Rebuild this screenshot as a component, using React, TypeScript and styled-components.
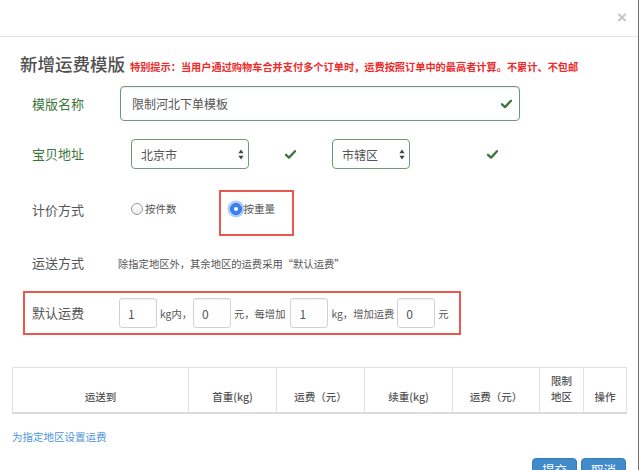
import React from "react";
import styled, { createGlobalStyle } from "styled-components";

const Global = createGlobalStyle`
  html, body { margin: 0; padding: 0; background: #fff; }
  body { font-family: "Noto Sans CJK SC", "Noto Sans", sans-serif; color: #555; }
  * { box-sizing: border-box; }
`;

const Modal = styled.div`
  width: 639px;
  height: 470px;
  border-right: 1px solid #6e6e6e;
  overflow: hidden;
  background: #fff;
`;

const Header = styled.div`
  height: 37px;
  border-bottom: 1px solid #e5e5e5;
  display: flex;
  justify-content: flex-end;
  align-items: center;
  padding-right: 11px;
`;

const Close = styled.span`
  font-family: "Liberation Sans", Arial, sans-serif;
  font-size: 17px;
  font-weight: bold;
  color: #c4c4c4;
  line-height: 1;
  margin-top: -1px;
`;

const Body = styled.div`
  padding: 14px 12px 0 12px;
  display: flex;
  flex-direction: column;
`;

const TitleRow = styled.div`
  display: flex;
  align-items: baseline;
  gap: 5px;
  padding-left: 8px;
  height: 26px;
`;

const Title = styled.h4`
  margin: 0;
  font-size: 17.5px;
  font-weight: 500;
  color: #505050;
  line-height: 26px;
`;

const Hint = styled.span`
  font-size: 10.2px;
  font-weight: bold;
  color: #ec2b2b;
`;

const Row = styled.div<{ $top: number; $h: number; $align?: string }>`
  display: flex;
  align-items: ${(p) => p.$align ?? "center"};
  margin-top: ${(p) => p.$top}px;
  height: ${(p) => p.$h}px;
  padding-left: 20px;
`;

const Label = styled.label<{ $ok?: boolean; $w?: number; $mt?: number }>`
  width: ${(p) => p.$w ?? 88}px;
  flex: none;
  font-size: 13px;
  line-height: 18px;
  margin-top: ${(p) => p.$mt ?? 0}px;
  color: ${(p) => (p.$ok ? "#3c763d" : "#555")};
`;

const InputWrap = styled.div<{ $w: number }>`
  position: relative;
  width: ${(p) => p.$w}px;
  height: 100%;
`;

const TextInput = styled.div`
  width: 100%;
  height: 100%;
  border: 1px solid #6f9a6f;
  border-radius: 4px;
  box-shadow: inset 0 1px 1px rgba(0, 0, 0, 0.075);
  padding-left: 11px;
  display: flex;
  align-items: center;
  font-size: 12px;
  color: #555;
`;

const Feedback = styled.span`
  position: absolute;
  right: 8px;
  top: 50%;
  transform: translateY(-50%);
  display: flex;
`;

const Check = () => (
  <svg width="11" height="9" viewBox="0 0 11 9">
    <path d="M1 4.8 L4 7.6 L10 1.2" fill="none" stroke="#3c763d" strokeWidth="2.3" strokeLinecap="round" strokeLinejoin="round" />
  </svg>
);

const SelectGroup = styled.div`
  display: flex;
  align-items: center;
  height: 100%;
  padding-left: 11px;
`;

const Select = styled.div<{ $w: number }>`
  width: ${(p) => p.$w}px;
  height: 100%;
  border: 1px solid #6f9a6f;
  border-radius: 4px;
  padding: 0 4px 0 9px;
  display: flex;
  align-items: center;
  justify-content: space-between;
  font-size: 12px;
  color: #555;
`;

const CheckSlot = styled.span<{ $w: number }>`
  width: ${(p) => p.$w}px;
  display: flex;
  justify-content: center;
`;

const Arrows = () => (
  <svg width="6" height="11" viewBox="0 0 6 11">
    <path d="M3 0.5 L5.6 4.3 L0.4 4.3 Z" fill="#444" />
    <path d="M3 10.5 L5.6 6.7 L0.4 6.7 Z" fill="#444" />
  </svg>
);

const RadioGroup = styled.div`
  display: flex;
  align-items: flex-start;
  height: 100%;
  padding-left: 11px;
`;

const RadioOption = styled.span<{ $mt?: number }>`
  display: flex;
  align-items: center;
  gap: 2px;
  font-size: 10.5px;
  line-height: 14px;
  color: #555;
  margin-top: ${(p) => p.$mt ?? 0}px;
`;

const RadioDot = styled.span<{ $on?: boolean }>`
  width: 12px;
  height: 12px;
  border-radius: 50%;
  flex: none;
  display: flex;
  align-items: center;
  justify-content: center;
  border: 1px solid ${(p) => (p.$on ? "#2f74e6" : "#9a9a9a")};
  background: ${(p) => (p.$on ? "#3a82f0" : "linear-gradient(#fff, #ececec)")};
  box-shadow: ${(p) => (p.$on ? "0 0 0 2.5px rgba(80,140,240,0.45)" : "none")};
  &::after {
    content: "";
    display: ${(p) => (p.$on ? "block" : "none")};
    width: 4px;
    height: 4px;
    border-radius: 50%;
    background: #fff;
  }
`;

const Highlight = styled.div<{ $w: number; $h: number }>`
  width: ${(p) => p.$w}px;
  height: ${(p) => p.$h}px;
  border: 2px solid #e9574e;
  display: flex;
  align-items: center;
`;

const PriceBox = styled(Highlight)`
  padding-left: 7px;
  margin-left: -9px;
`;

const RadioBox = styled(Highlight)`
  align-items: flex-start;
  padding: 10px 0 0 9px;
  margin-left: 42px;
`;

const Note = styled.span`
  font-size: 10.3px;
  color: #555;
  margin-left: -2px;
`;

const SmallInput = styled.div`
  width: 38px;
  height: 30px;
  border: 1px solid #d2d2d2;
  border-radius: 3px;
  box-shadow: inset 0 1px 1px rgba(0, 0, 0, 0.06);
  padding-left: 8px;
  display: flex;
  align-items: center;
  font-size: 12px;
  color: #555;
  flex: none;
`;

const Unit = styled.span<{ $gap: number }>`
  font-size: 10.3px;
  color: #555;
  padding: 0 ${(p) => p.$gap}px 0 3px;
  white-space: nowrap;
`;

const Table = styled.table`
  margin-top: 32px;
  width: 614px;
  border-collapse: collapse;
  table-layout: fixed;
`;

const Th = styled.th<{ $w: number }>`
  width: ${(p) => p.$w}px;
  height: 45px;
  border: 1px solid #e2e2e2;
  border-bottom: 2px solid #dcdcdc;
  vertical-align: bottom;
  text-align: center;
  padding: 0 4px 7px;
  font-size: 10.5px;
  font-weight: 500;
  color: #555;
  line-height: 16px;
`;

const AddLink = styled.a`
  margin-top: 15px;
  font-size: 10.5px;
  color: #4d94de;
  text-decoration: none;
  line-height: 16px;
  align-self: flex-start;
`;

const Footer = styled.div`
  margin-top: 13px;
  display: flex;
  justify-content: flex-end;
  gap: 4px;
`;

const Button = styled.button`
  width: 45px;
  height: 30px;
  border: 1px solid #357ebd;
  background: #428bca;
  color: #fff;
  border-radius: 4px;
  font-family: "Noto Sans CJK SC", sans-serif;
  font-size: 12.5px;
  padding: 0 0 6px;
`;

export default function App() {
  const cols: [React.ReactNode, number][] = [
    ["运送到", 176],
    ["首重(kg)", 88],
    ["运费（元）", 88],
    ["续重(kg)", 88],
    ["运费（元）", 87],
    [<>限制<br />地区</>, 44],
    ["操作", 43],
  ];
  return (
    <>
      <Global />
      <Modal>
        <Header>
          <Close>×</Close>
        </Header>
        <Body>
          <TitleRow>
            <Title>新增运费模版</Title>
            <Hint>特别提示：当用户通过购物车合并支付多个订单时，运费按照订单中的最高者计算。不累计、不包邮</Hint>
          </TitleRow>

          <Row $top={9} $h={35}>
            <Label $ok>模版名称</Label>
            <InputWrap $w={400}>
              <TextInput>限制河北下单模板</TextInput>
              <Feedback>
                <Check />
              </Feedback>
            </InputWrap>
          </Row>

          <Row $top={18} $h={30}>
            <Label $ok>宝贝地址</Label>
            <SelectGroup>
              <Select $w={118}>
                北京市
                <Arrows />
              </Select>
              <CheckSlot $w={83}>
                <Check />
              </CheckSlot>
              <Select $w={78}>
                市辖区
                <Arrows />
              </Select>
              <CheckSlot $w={164}>
                <Check />
              </CheckSlot>
            </SelectGroup>
          </Row>

          <Row $top={21} $h={46} $align="flex-start">
            <Label $mt={11}>计价方式</Label>
            <RadioGroup>
              <RadioOption $mt={12}>
                <RadioDot />
                按件数
              </RadioOption>
              <RadioBox $w={75} $h={46}>
                <RadioOption>
                  <RadioDot $on />
                  按重量
                </RadioOption>
              </RadioBox>
            </RadioGroup>
          </Row>

          <Row $top={12} $h={30}>
            <Label>运送方式</Label>
            <Note>除指定地区外，其余地区的运费采用“默认运费”</Note>
          </Row>

          <Row $top={13} $h={44}>
            <PriceBox $w={438} $h={44}>
              <Label $w={87}>默认运费</Label>
              <SmallInput>1</SmallInput>
              <Unit $gap={1}>kg内，</Unit>
              <SmallInput>0</SmallInput>
              <Unit $gap={5}>元，每增加</Unit>
              <SmallInput>1</SmallInput>
              <Unit $gap={3}>kg，增加运费</Unit>
              <SmallInput>0</SmallInput>
              <Unit $gap={0}>元</Unit>
            </PriceBox>
          </Row>

          <Table>
            <thead>
              <tr>
                {cols.map(([t, w], i) => (
                  <Th key={i} $w={w}>
                    {t}
                  </Th>
                ))}
              </tr>
            </thead>
          </Table>

          <AddLink href="#">为指定地区设置运费</AddLink>

          <Footer>
            <Button>提交</Button>
            <Button>取消</Button>
          </Footer>
        </Body>
      </Modal>
    </>
  );
}
